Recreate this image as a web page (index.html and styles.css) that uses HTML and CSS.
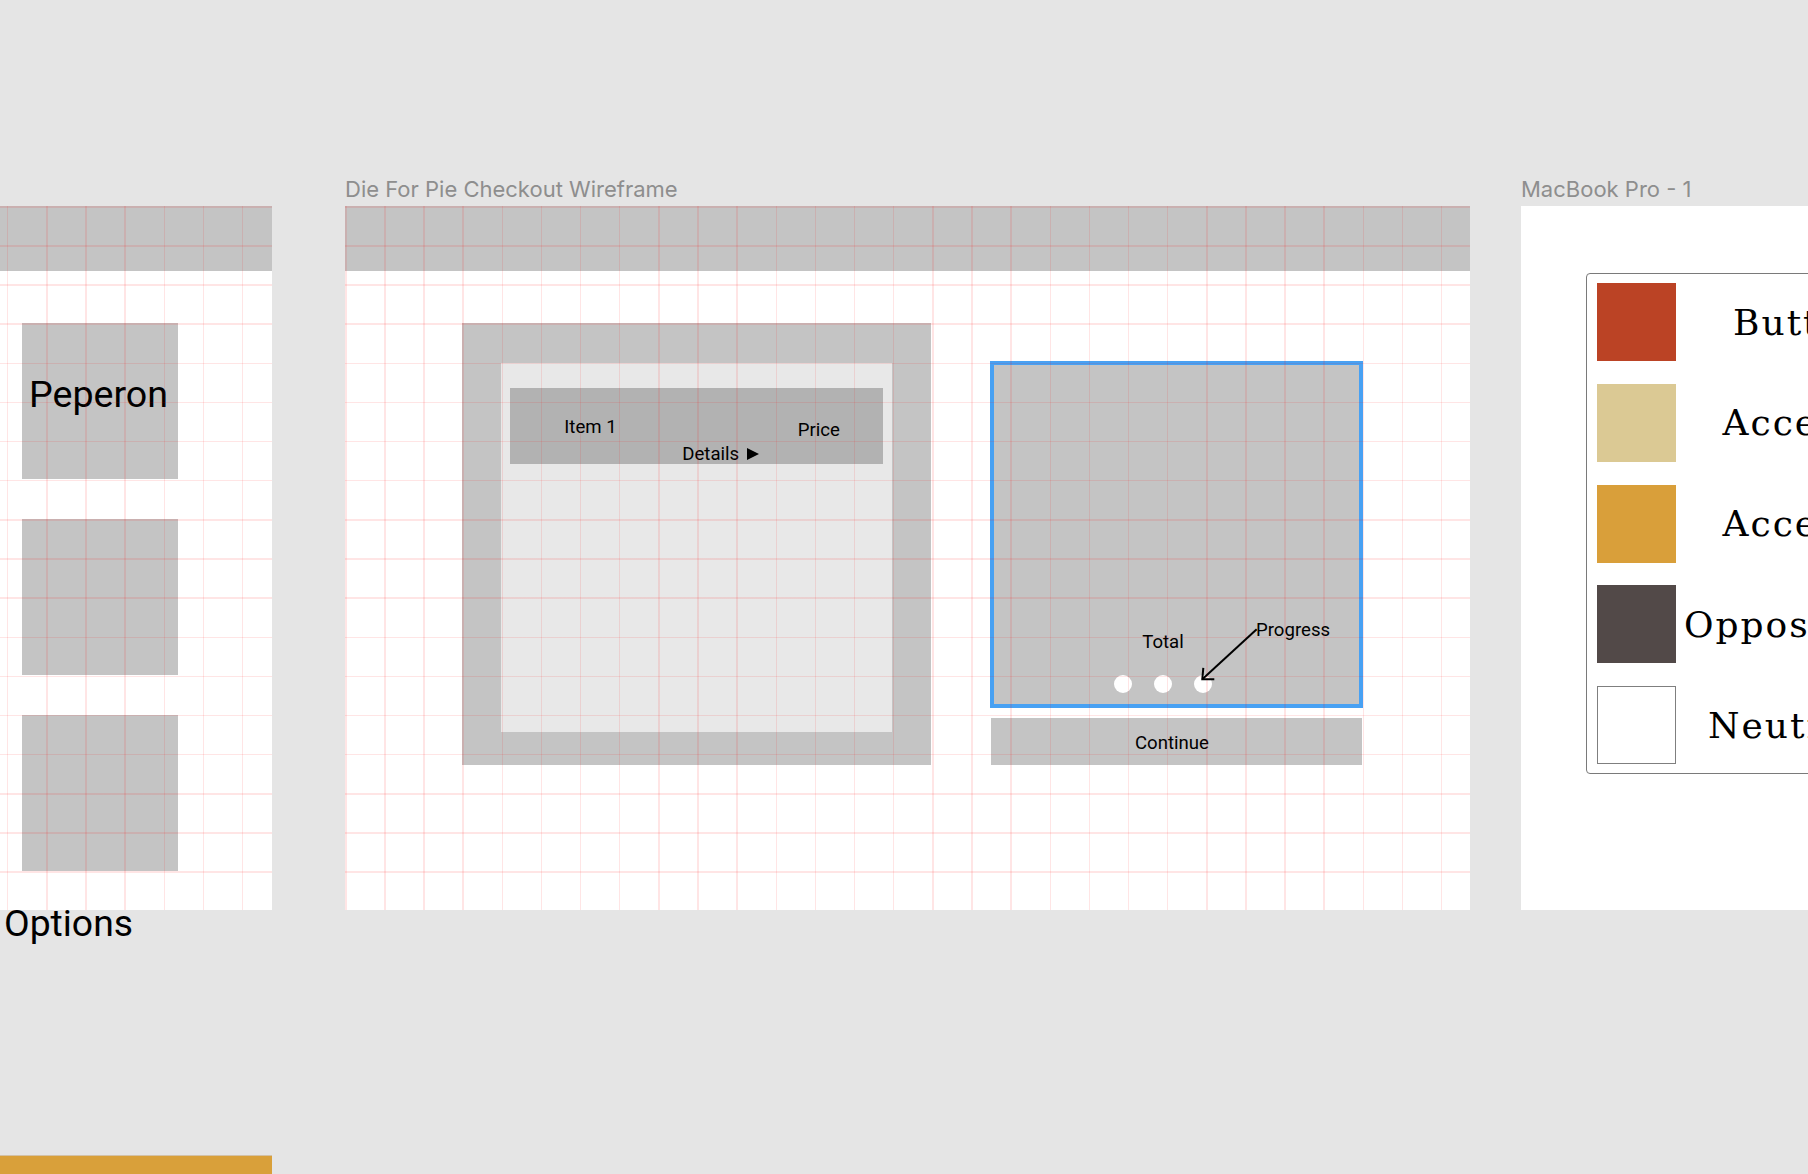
FILE: index.html
```html
<!DOCTYPE html>
<html lang="en">
<head>
<meta charset="utf-8">
<title>Die For Pie Checkout Wireframe</title>
<link rel="stylesheet" href="styles.css">
</head>
<body>
<div class="canvas">
  <div class="col col-left">
    <div class="frame frame-left">
      <div class="frame-header"></div>
      <div class="left-body">
        <div class="option-box"><span class="option-name">Peperon</span></div>
        <div class="option-box"></div>
        <div class="option-box"></div>
      </div>
    </div>
    <div class="options-label">Options</div>
    <div class="frame-below"></div>
  </div>

  <div class="col col-main">
    <div class="frame-title">Die For Pie Checkout Wireframe</div>
    <div class="frame frame-main">
      <div class="frame-header"></div>
      <div class="main-body">
        <div class="cart">
          <div class="cart-inner">
            <div class="item-row">
              <div class="item-top">
                <span class="item-name">Item 1</span>
                <span class="item-price">Price</span>
              </div>
              <div class="item-details">Details<span class="tri"></span></div>
            </div>
          </div>
        </div>
        <div class="summary">
          <div class="total-card">
            <div class="total-label">Total</div>
            <div class="dots"><span class="dot"></span><span class="dot"></span><span class="dot"></span></div>
            <div class="annotation">Progress</div>
            <svg class="arrow" width="62" height="60" viewBox="0 0 62 60">
              <path d="M58.7 5.3 L4.3 55.3" fill="none" stroke="#000" stroke-width="2"/>
              <path d="M5.3 43.8 L4.3 55.3 L16.3 55.3" fill="none" stroke="#000" stroke-width="2"/>
            </svg>
          </div>
          <div class="continue">Continue</div>
        </div>
      </div>
    </div>
  </div>

  <div class="col col-right">
    <div class="frame-title">MacBook Pro - 1</div>
    <div class="frame frame-mac">
      <div class="palette">
        <div class="pal-row"><span class="swatch sw-red"></span><span class="pal-label pl-button">Button</span></div>
        <div class="pal-row"><span class="swatch sw-beige"></span><span class="pal-label pl-accent">Accent 1</span></div>
        <div class="pal-row"><span class="swatch sw-gold"></span><span class="pal-label pl-accent">Accent 2</span></div>
        <div class="pal-row"><span class="swatch sw-dark"></span><span class="pal-label pl-opp">Opposite</span></div>
        <div class="pal-row"><span class="swatch sw-white"></span><span class="pal-label pl-neutral">Neutral</span></div>
      </div>
    </div>
  </div>
</div>
</body>
</html>
```

FILE: styles.css
```css
html, body {
  margin: 0;
  padding: 0;
  width: 1808px;
  height: 1174px;
  overflow: hidden;
  background: #e5e5e5;
}

body {
  font-family: Roboto, "Liberation Sans", sans-serif;
  color: #000;
}

.canvas {
  display: flex;
  align-items: flex-start;
  padding-top: 176px;
}

.col {
  flex: none;
  display: flex;
  flex-direction: column;
}

.col-left {
  width: 272px;
  padding-top: 30px;
}

.col-main {
  width: 1125px;
  margin-left: 73px;
}

.col-right {
  width: 520px;
  margin-left: 51px;
}

.frame-title {
  font-family: Inter, "Liberation Sans", sans-serif;
  font-size: 22px;
  line-height: 26px;
  color: #8e8e8e;
  margin-bottom: 4px;
  white-space: nowrap;
}

.frame {
  position: relative;
  background: #fff;
  height: 704px;
}

.frame-left::after,
.frame-main::after {
  content: "";
  position: absolute;
  inset: 0;
  pointer-events: none;
  background-image:
    repeating-linear-gradient(to right, rgba(255, 0, 0, 0.1) 0 1.5px, transparent 1.5px 39.14px),
    repeating-linear-gradient(to bottom, rgba(255, 0, 0, 0.1) 0 1.5px, transparent 1.5px 39.14px);
}

.frame-left::after {
  background-position: 7px 0, 0 0;
}

.frame-header {
  height: 65px;
  background: #c4c4c4;
}

/* Left frame */
.left-body {
  display: flex;
  flex-direction: column;
  gap: 40px;
  padding: 52px 0 0 22px;
}

.option-box {
  width: 156px;
  height: 156px;
  background: #c4c4c4;
  box-sizing: border-box;
  padding: 49px 0 0 7px;
}

.option-name {
  display: block;
  font-size: 37.6px;
  line-height: 44px;
  white-space: nowrap;
}

.options-label {
  font-size: 37.3px;
  line-height: 44px;
  margin-top: -9px;
  padding-left: 4px;
  position: relative;
}

.frame-below {
  margin-top: 210px;
  height: 40px;
  background: #d9a03a;
  border-top: 1px solid #d3c1a6;
}

/* Main frame */
.main-body {
  display: flex;
  align-items: flex-start;
  padding: 52px 0 0 117px;
}

.cart {
  width: 469px;
  height: 442px;
  box-sizing: border-box;
  background: #c4c4c4;
  padding: 40px 39px 33px 39px;
  display: flex;
}

.cart-inner {
  flex: 1;
  background: #e8e8e8;
}

.item-row {
  margin: 25.3px 9.3px 0;
  height: 76px;
  box-sizing: border-box;
  background: #b2b2b2;
  padding: 29px 0 0 54px;
  font-size: 18.6px;
  line-height: 21px;
}

.item-top {
  display: flex;
  align-items: flex-start;
}

.item-name {
  width: 233.5px;
}

.item-price {
  margin-top: 2.5px;
}

.item-details {
  margin: 3px 0 0 118px;
}

.tri {
  display: inline-block;
  width: 0;
  height: 0;
  border-left: 12px solid #000;
  border-top: 6.5px solid transparent;
  border-bottom: 6.5px solid transparent;
  margin-left: 8px;
  margin-bottom: 0;
}

.summary {
  margin: 38px 0 0 59px;
  width: 373px;
  display: flex;
  flex-direction: column;
}

.total-card {
  position: relative;
  height: 347px;
  box-sizing: border-box;
  border: 4px solid #48a1f3;
  background: #c4c4c4;
  display: flex;
  flex-direction: column;
  justify-content: flex-end;
  align-items: center;
  padding: 0 27px 10.7px 0;
  font-size: 18.6px;
  line-height: 21px;
}

.total-label {
  margin-bottom: 22.2px;
}

.dots {
  display: flex;
  gap: 21.8px;
}

.dot {
  width: 18px;
  height: 18px;
  border-radius: 50%;
  background: #fff;
}

.annotation {
  position: absolute;
  left: 262px;
  top: 255px;
  z-index: 2;
}

.arrow {
  position: absolute;
  left: 204px;
  top: 259px;
  z-index: 2;
}

.continue {
  margin: 10px 0 0 1px;
  width: 371px;
  height: 47px;
  box-sizing: border-box;
  background: #c4c4c4;
  font-size: 18.6px;
  line-height: 44px;
  padding: 3px 9px 0 0;
  text-align: center;
}

/* MacBook frame */
.frame-mac {
  padding: 67px 0 0 65px;
  box-sizing: border-box;
}

.palette {
  width: 420px;
  border: 1px solid #7a7a7a;
  border-radius: 4px;
  padding: 9px 10px;
  display: flex;
  flex-direction: column;
  gap: 22.75px;
}

.pal-row {
  display: flex;
  align-items: center;
  height: 78px;
}

.swatch {
  flex: none;
  width: 79px;
  height: 78px;
  box-sizing: border-box;
}

.sw-red { background: #bb4325; }
.sw-beige { background: #dbc994; }
.sw-gold { background: #d99f3a; }
.sw-dark { background: #524948; }
.sw-white { background: #fff; border: 1px solid #7f7f7f; }

.pal-label {
  font-family: "DejaVu Serif", "Liberation Serif", serif;
  font-size: 36px;
  letter-spacing: 2px;
  white-space: nowrap;
}

.pl-button { margin-left: 57px; }
.pl-accent { margin-left: 46.5px; }
.pl-opp { margin-left: 8px; }
.pl-neutral { margin-left: 32px; }
```
